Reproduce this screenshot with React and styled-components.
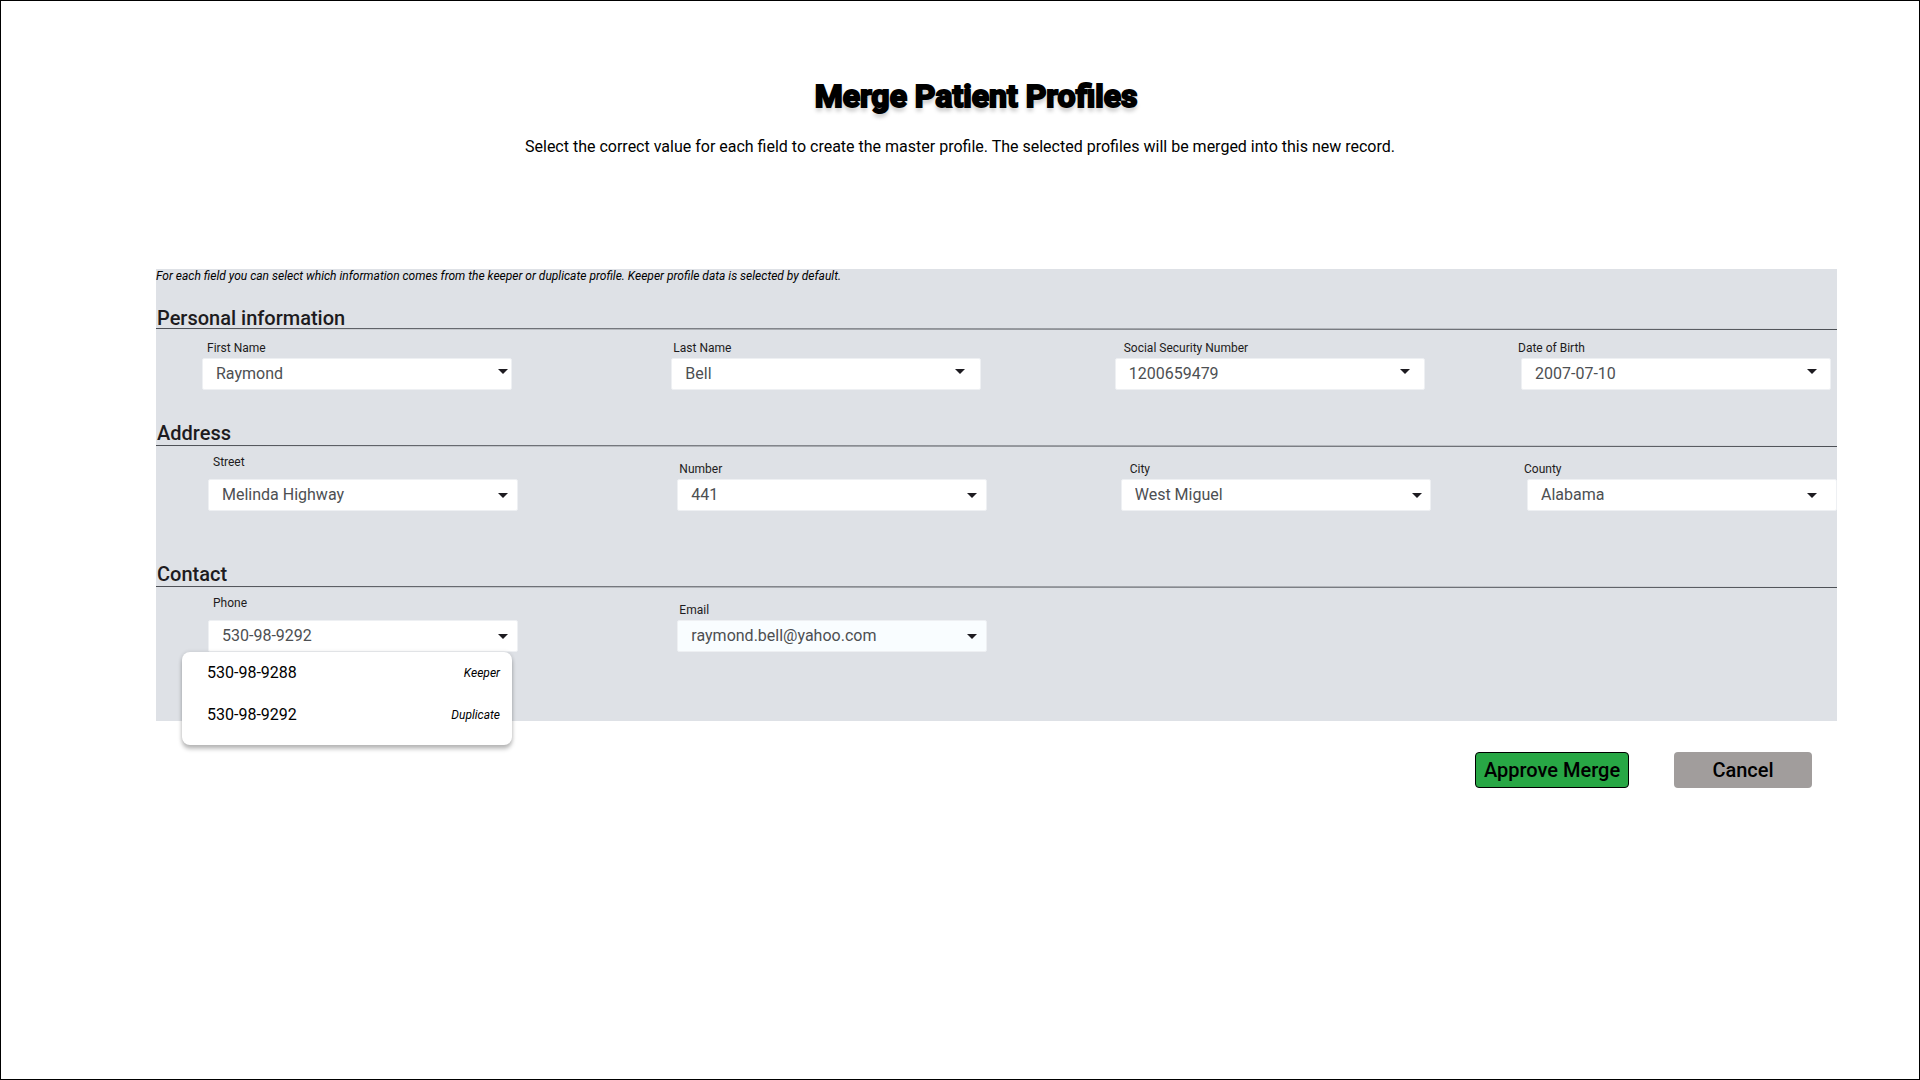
import React, { useState } from "react";
import styled, { createGlobalStyle } from "styled-components";

const GlobalStyle = createGlobalStyle`
  *, *::before, *::after { box-sizing: border-box; }
  body {
    margin: 0;
    background: #fff;
    color: #000;
    font-family: Roboto, "Liberation Sans", sans-serif;
  }
`;

const Page = styled.main`
  min-height: 100vh;
  padding: 76px 82px 0 155px;
  border: 1px solid #000;
`;

const Header = styled.header`
  display: flex;
  flex-direction: column;
  align-items: center;
  gap: 22px;
  margin-right: 73px;
  margin-bottom: 112px;
  text-align: center;
`;

const Title = styled.h1`
  margin: 0;
  padding-left: 32px;
  font-size: 32px;
  font-weight: 700;
  line-height: 38px;
  -webkit-text-stroke: 2px #000;
  text-shadow: 0 4px 4px rgba(0, 0, 0, 0.25);
`;

const Subtitle = styled.p`
  margin: 0;
  font-size: 16px;
  line-height: 20px;
`;

const Panel = styled.form`
  padding-bottom: 69px;
  background: #dee1e6;
`;

const Note = styled.p`
  margin: 0 0 25px;
  font-size: 12px;
  font-style: italic;
  line-height: 14px;
`;

const Section = styled.section`
  margin-top: ${(p) => p.$space || 0}px;
`;

const SectionTitle = styled.h2`
  margin: 0;
  padding: 0 0 ${(p) => (p.$tight ? 0 : 2)}px 1px;
  color: #1d1b20;
  font-size: 20px;
  font-weight: 500;
  line-height: 20px;
`;

const Rule = styled.div`
  height: 2px;
  background:
    linear-gradient(to right, #4d5056, #dee1e6) top / 100% 1px no-repeat,
    linear-gradient(to left, #4d5056, #dee1e6) bottom / 100% 1px no-repeat;
`;

const FieldRow = styled.div`
  display: grid;
  grid-template-columns: 469fr 443fr 406fr 310px;
  align-items: end;
  padding: ${(p) => (p.$inset ? "8px 0 0 52px" : "11px 6px 0 46px")};
`;

const FieldBox = styled.div`
  position: relative;
  display: flex;
  flex-direction: column;
  width: 310px;
  gap: ${(p) => (p.$raised ? 10 : 3)}px;
`;

const Label = styled.label`
  margin-left: ${(p) => p.$indent}px;
  color: #1d1b20;
  font-size: 12px;
  line-height: 14px;
`;

const Control = styled.div`
  position: relative;
  display: flex;
`;

const Select = styled.select`
  appearance: none;
  width: 100%;
  height: 32px;
  margin: 0;
  padding: 0 32px 0 13px;
  border: 1px solid #eef0f3;
  border-radius: 2px;
  background: ${(p) => (p.$tinted ? "#f9fdff" : "#fff")};
  color: #4d4f52;
  font: 400 16px/20px Roboto, "Liberation Sans", sans-serif;
`;

const Arrow = styled.svg`
  position: absolute;
  right: ${(p) => p.$inset}px;
  top: ${(p) => (p.$high ? 11 : 14)}px;
  width: 10px;
  height: 5px;
  fill: #1d1b20;
  pointer-events: none;
`;

const Menu = styled.ul`
  position: absolute;
  top: 100%;
  left: -26px;
  width: 330px;
  margin: 0;
  padding: 0 0 9px;
  border-radius: 8px;
  background: #fff;
  box-shadow: 0 4px 4px rgba(0, 0, 0, 0.25), 0 0 4px rgba(0, 0, 0, 0.12);
  list-style: none;
  z-index: 1;
`;

const MenuItem = styled.button`
  display: flex;
  align-items: center;
  justify-content: space-between;
  width: 100%;
  height: 42px;
  padding: 0 12px 0 25px;
  border: 0;
  background: none;
  color: #000;
  font: 400 16px/20px Roboto, "Liberation Sans", sans-serif;
  cursor: pointer;
`;

const Source = styled.em`
  font-size: 12px;
`;

const Actions = styled.div`
  display: flex;
  justify-content: flex-end;
  gap: 45px;
  margin: 31px 25px 0 0;
`;

const Button = styled.button`
  width: ${(p) => (p.$primary ? 154 : 138)}px;
  height: 36px;
  padding: 0;
  border: ${(p) => (p.$primary ? "1px solid #000" : "0")};
  border-radius: 4px;
  background: ${(p) => (p.$primary ? "#28a745" : "#a19d9c")};
  color: #000;
  font: 500 20px/24px Roboto, "Liberation Sans", sans-serif;
  cursor: pointer;
`;

const SECTIONS = [
  {
    title: "Personal information",
    tight: true,
    fields: [
      { id: "first", label: "First Name", value: "Raymond", indent: 5, arrow: 4 },
      { id: "last", label: "Last Name", value: "Bell", indent: 2, arrow: 16 },
      { id: "ssn", label: "Social Security Number", value: "1200659479", indent: 9, arrow: 15 },
      { id: "dob", label: "Date of Birth", value: "2007-07-10", indent: -3, arrow: 14 },
    ],
  },
  {
    title: "Address",
    space: 33,
    fields: [
      { id: "street", label: "Street", value: "Melinda Highway", indent: 5, arrow: 10, raised: true },
      { id: "number", label: "Number", value: "441", indent: 2, arrow: 10 },
      { id: "city", label: "City", value: "West Miguel", indent: 9, arrow: 9 },
      { id: "county", label: "County", value: "Alabama", indent: -3, arrow: 20 },
    ],
  },
  {
    title: "Contact",
    space: 53,
    fields: [
      {
        id: "phone",
        label: "Phone",
        value: "530-98-9292",
        indent: 5,
        arrow: 10,
        raised: true,
        choices: [
          { value: "530-98-9288", source: "Keeper" },
          { value: "530-98-9292", source: "Duplicate" },
        ],
      },
      { id: "email", label: "Email", value: "raymond.bell@yahoo.com", indent: 2, arrow: 10, tinted: true },
    ],
  },
];

function Field({ field, highArrow }) {
  const [value, setValue] = useState(field.value);
  const choices = field.choices || [{ value: field.value }];
  return (
    <FieldBox $raised={field.raised}>
      <Label htmlFor={field.id} $indent={field.indent}>{field.label}</Label>
      <Control>
        <Select
          id={field.id}
          value={value}
          $tinted={field.tinted}
          onChange={(e) => setValue(e.target.value)}
        >
          {choices.map((c) => (
            <option key={c.value} value={c.value}>{c.value}</option>
          ))}
        </Select>
        <Arrow viewBox="0 0 10 5" $inset={field.arrow} $high={highArrow} aria-hidden="true">
          <path d="M0 0H10L5 5Z" />
        </Arrow>
      </Control>
      {field.choices && (
        <Menu>
          {field.choices.map((c) => (
            <li key={c.value}>
              <MenuItem type="button" onClick={() => setValue(c.value)}>
                <span>{c.value}</span>
                <Source>{c.source}</Source>
              </MenuItem>
            </li>
          ))}
        </Menu>
      )}
    </FieldBox>
  );
}

export default function App() {
  return (
    <>
      <GlobalStyle />
      <Page>
        <Header>
          <Title>Merge Patient Profiles</Title>
          <Subtitle>
            Select the correct value for each field to create the master profile. The selected
            profiles will be merged into this new record.
          </Subtitle>
        </Header>
        <Panel id="merge" onSubmit={(e) => e.preventDefault()}>
          <Note>
            For each field you can select which information comes from the keeper or duplicate
            profile. Keeper profile data is selected by default.
          </Note>
          {SECTIONS.map((s) => (
            <Section key={s.title} $space={s.space}>
              <SectionTitle $tight={s.tight}>{s.title}</SectionTitle>
              <Rule />
              <FieldRow $inset={!s.tight}>
                {s.fields.map((f) => (
                  <Field key={f.id} field={f} highArrow={s.tight} />
                ))}
              </FieldRow>
            </Section>
          ))}
        </Panel>
        <Actions>
          <Button type="submit" form="merge" $primary>Approve Merge</Button>
          <Button type="button">Cancel</Button>
        </Actions>
      </Page>
    </>
  );
}
